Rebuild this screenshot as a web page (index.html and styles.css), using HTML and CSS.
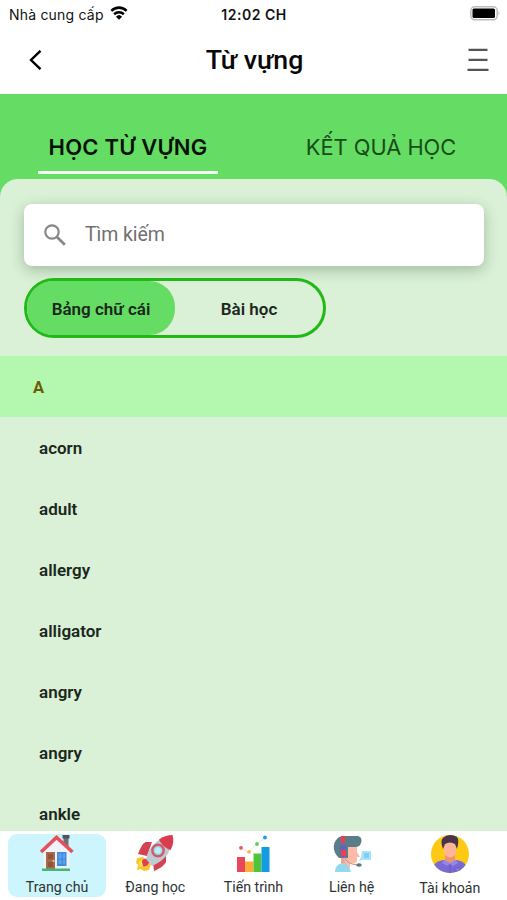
FILE: index.html
```html
<!DOCTYPE html>
<html lang="vi">
<head>
    <meta charset="UTF-8">
    <meta name="viewport" content="width=device-width, initial-scale=1.0">
    <title>Từ vựng</title>
    <link rel="stylesheet" href="styles.css">
</head>
<body>
    <div class="app">
        <div class="status-bar">
            <div class="carrier">
                <span class="carrier-name">Nhà cung cấp</span>
                <svg class="wifi" width="18" height="14" viewBox="0 0 20 15" preserveAspectRatio="none" fill="none" stroke="#000" stroke-width="2.8">
                    <path d="M1.5 5.2a12.2 12.2 0 0 1 17 0"/>
                    <path d="M4.6 8.9a7.8 7.8 0 0 1 10.8 0"/>
                    <path d="M10 14.8 6.6 11.4a4.9 4.9 0 0 1 6.8 0z" fill="#000" stroke="none"/>
                </svg>
            </div>
            <div class="time">12:02 CH</div>
            <div class="battery-wrap">
                <svg width="31" height="15" viewBox="0 0 31 15">
                    <rect x=".8" y=".8" width="26.4" height="13" rx="4" fill="#fff" stroke="#bbb" stroke-width="1.5"/>
                    <rect x="2.5" y="2.5" width="22.500" height="9.6" rx="1.500" fill="#000"/>
                    <path d="M28.5 5.2q2 2 0 4.2z" fill="#bbb"/>
                </svg>
            </div>
        </div>

        <header class="header">
            <button class="icon-btn back">
                <svg width="14" height="20" viewBox="0 0 14 20" fill="none" stroke="#000" stroke-width="2.4"><path d="M12.500 .8 3 10l9.500 9.200"/></svg>
            </button>
            <h1 class="title">Từ vựng</h1>
            <button class="icon-btn menu">
                <svg width="22" height="24" viewBox="0 0 22 24" stroke="#555" stroke-width="2.2"><path d="M1.5 1.9h19M1.5 11.9h19M.5 21.9h21"/></svg>
            </button>
        </header>

        <div class="tabs">
            <div class="tab active">HỌC TỪ VỰNG</div>
            <div class="tab">KẾT QUẢ HỌC</div>
        </div>

        <main class="panel">
            <div class="search">
                <svg width="22" height="22" viewBox="0 0 22 22" fill="none" stroke="#888">
                    <circle cx="8" cy="8" r="6.7" stroke-width="2.2"/>
                    <path d="m13 13 7.8 7.8" stroke-width="2.8"/>
                </svg>
                <span class="search-text">Tìm kiếm</span>
            </div>

            <div class="switch">
                <div class="option selected">Bảng chữ cái</div>
                <div class="option">Bài học</div>
            </div>

            <div class="letter">A</div>
            <ul class="words">
                <li>acorn</li>
                <li>adult</li>
                <li>allergy</li>
                <li>alligator</li>
                <li>angry</li>
                <li>angry</li>
                <li>ankle</li>
            </ul>
        </main>

        <nav class="bottom-nav">
            <a class="nav-item current">
                <!-- house -->
                <svg width="38" height="38" viewBox="0 0 38 38">
                    <path d="M25.500 2h5v13l-5-6z" fill="#68717b"/>
                    <path d="M24.500 1h7v3.500h-7z" fill="#4c535c"/>
                    <path d="M5.500 16 18.500 5l13 12v18h-26z" fill="#eff2fb"/>
                    <path d="M3 18 18.500 3.500 34.500 18" fill="none" stroke="#e84f59" stroke-width="3.500"/>
                    <path d="M8 18h9v17H8z" fill="#a6694d"/>
                    <path d="M10 20h5v5h-5zM10 28h5v5h-5z" fill="#925339"/>
                    <circle cx="15.500" cy="27" r="1" fill="#f4d68c"/>
                    <path d="M19 18h9.500v14H19z" fill="#438be0"/>
                    <path d="M20.500 19.500h3v5h-3zM25 19.500h2v5h-2zM20.500 26h3v4h-3zM25 26h2v4h-2z" fill="#5aa2ec"/>
                    <path d="M4 34.500h28V37H4z" fill="#42b878"/>
                </svg>
                <span class="nav-text">Trang chủ</span>
            </a>
            <a class="nav-item">
                <!-- rocket -->
                <svg width="38" height="38" viewBox="0 0 38 38">
                    <path d="M16 8H9.500C6 10 4 15 2 20l9 2z" fill="#d34355"/>
                    <path d="M30 20v8c-2 4-7 7-12 9l-1-9z" fill="#d34355"/>
                    <path d="M1 24 7 23l8 7-2 6-5 1-3-2-4 1 1-5-2-2z" fill="#f6c82e"/>
                    <path d="m3 28 3-2 2 5 3-1-1 4-3-2-3 1z" fill="#ffe45c"/>
                    <path d="M6 28c0-4 6-4 7-1 1 3-4 7-6 5z" fill="#df4050"/>
                    <path d="M10 25C13 14 19 4 36 2c1 14-6 24-20 30z" fill="#bdcbd2"/>
                    <path d="M23 5.500C28 2 32 1 36.500 1c1.500 5 1 10-2 15C29 14 25 10 23 5.500z" fill="#d83c4d"/>
                    <circle cx="22" cy="16.500" r="5.700" fill="#9bd9ef" stroke="#d65865" stroke-width="2.400"/>
                    <circle cx="22" cy="16.500" r="3" fill="#baf0fa"/>
                </svg>
                <span class="nav-text">Đang học</span>
            </a>
            <a class="nav-item">
                <!-- chart -->
                <svg width="38" height="38" viewBox="0 0 38 38">
                    <path d="m6.500 14 8 4 8-8 8-6" fill="none" stroke="#d8e6ec"/>
                    <path d="M3 23h8v15H3z" fill="#e9485b"/>
                    <path d="M11 27.500h8.500V38H11z" fill="#ffad35"/>
                    <path d="M19.500 19.500h8V38h-8z" fill="#4fc63a"/>
                    <path d="M27.500 13h8v25h-8z" fill="#139be4"/>
                    <circle cx="7" cy="13.800" r="1.900" fill="#e85368"/>
                    <circle cx="15" cy="17.800" r="1.900" fill="#ffb34b"/>
                    <circle cx="23" cy="10" r="1.900" fill="#62cd51"/>
                    <circle cx="31" cy="3.500" r="1.900" fill="#199fe4"/>
                </svg>
                <span class="nav-text">Tiến trình</span>
            </a>
            <a class="nav-item">
                <!-- headset -->
                <svg width="38" height="38" viewBox="0 0 38 38">
                    <path d="M8 12h16v6l3 5h-3v4c-1 3-4 3-7 2v5H8z" fill="#ffbaa8"/>
                    <path d="M11 22c0 5 1 8 5 12H8V20z" fill="#f3a290"/>
                    <path d="M2 38c0-6 4-9 9-9 3 1 6 5 7 9z" fill="#93d9ee"/>
                    <path d="M4 5C6 2 10 2 14 2h9c6 0 6 4 5 7-1 3-3 4-6 4h-7v11H6C0 19-1 10 4 5z" fill="#597d89"/>
                    <path d="M7 11h6v11c-2 2-5 1-6-1z" fill="#6064bd"/>
                    <path d="M8 2h4v7H8zM8 16h5v6H8z" fill="#ef3c4e"/>
                    <path d="M11 23q3 7 13 8" fill="none" stroke="#a99aa1" stroke-width="1"/>
                    <ellipse cx="26" cy="31" rx="2.800" ry="1.700" fill="#607782"/>
                    <path d="M29 17h9v9h-9l-3 1 2-4z" fill="#a9e1f8"/>
                    <path d="M31 19h5v5h-5z" fill="#7dcff3"/>
                </svg>
                <span class="nav-text">Liên hệ</span>
            </a>
            <a class="nav-item account">
                <!-- avatar -->
                <svg width="40" height="40" viewBox="0 0 40 40">
                    <defs><clipPath id="avatar"><circle cx="20" cy="20" r="19"/></clipPath></defs>
                    <circle cx="20" cy="20" r="19" fill="#fdc915"/>
                    <g clip-path="url(#avatar)">
                        <path d="M3 42V33q1-5 10-7h14q9 2 10 8v9z" fill="#7969d5"/>
                        <path d="M15 18h10v9q-5 5-10 0z" fill="#ed9371"/>
                        <path d="M14 9q6-6 12 0v9c-1 7-11 7-12 0z" fill="#ffb599"/>
                        <path d="m14 26 6 3 6-3 2 3-5 3-3-2-3 2-5-3z" fill="#9286ed"/>
                        <path d="M20 30v9M25 34h5v3h-5z" fill="#8b7de9" stroke="#6656b9" stroke-width=".8"/>
                    </g>
                    <path d="M13 15c-2-6-2-9 0-11 3-3 8-4 12-2 4 1 4 6 2 13l-2-5q-5-3-10 0z" fill="#493548"/>
                </svg>
                <span class="nav-text">Tài khoản</span>
            </a>
        </nav>
    </div>
</body>
</html>
```
FILE: styles.css
```css
* { margin: 0; padding: 0; box-sizing: border-box; }

body {
    font-family: Roboto, sans-serif;
    background: #fff;
    color: #1b271b;
}

svg { display: block; flex-shrink: 0; }

.app {
    height: 900px;
    display: flex;
    flex-direction: column;
    overflow: hidden;
}

.status-bar {
    height: 28px;
    flex-shrink: 0;
    padding: 0 6px 0 9px;
    display: grid;
    grid-template-columns: 1fr 100px 1fr;
    align-items: center;
    font-family: Inter, sans-serif;
    font-size: 14px;
    color: #111;
}

.carrier { display: flex; align-items: center; gap: 6px; }
.carrier-name { letter-spacing: 0.2px; }
.wifi { margin-bottom: 2px; }

.time {
    margin-left: -2px;
    font-size: 14px;
    font-weight: 600;
    letter-spacing: 0.5px;
    text-align: center;
}

.battery-wrap { display: flex; justify-content: flex-end; margin-bottom: 2px; }

.header {
    height: 66px;
    flex-shrink: 0;
    padding: 0 18px 3px 28px;
    display: flex;
    align-items: center;
    justify-content: space-between;
}

.icon-btn {
    background: none;
    border: none;
    cursor: pointer;
}

.title {
    font-size: 26.7px;
    font-weight: 500;
    color: #080808;
}

.tabs {
    height: 103px;
    flex-shrink: 0;
    padding: 26px 36px 0 38px;
    display: flex;
    justify-content: space-between;
    background: #65dc64;
}

.tab {
    width: 180px;
    height: 54px;
    display: flex;
    align-items: center;
    justify-content: center;
    font-family: Inter, sans-serif;
    font-size: 21.8px;
    color: #174d19;
}

.tab.active {
    font-size: 22px;
    font-weight: 600;
    letter-spacing: 0.2px;
    color: #041004;
    border-bottom: 3px solid #f1fff0;
    border-radius: 1px;
    padding-top: 3px;
}

.panel {
    flex: 1;
    min-height: 0;
    margin-top: -18px;
    padding-top: 25px;
    background: #daf0d7;
    border-radius: 18px 18px 0 0;
    overflow: hidden;
}

.search {
    height: 62px;
    margin: 0 23px 12px 24px;
    padding: 0 20px 1px;
    display: flex;
    align-items: center;
    gap: 19px;
    background: #fff;
    border-radius: 8px;
    box-shadow: 0 4px 14px rgba(30, 70, 30, 0.3);
    font-size: 19.5px;
    color: #707070;
}

.search-text { letter-spacing: -0.1px; }

.switch {
    width: 302px;
    height: 60px;
    margin: 0 0 18px 24px;
    display: flex;
    border: 3.5px solid #20b915;
    border-radius: 30px;
}

.option {
    flex: 1;
    padding-top: 1px;
    display: flex;
    align-items: center;
    justify-content: center;
    border-radius: 26px;
    font-size: 17px;
    font-weight: 600;
}

.option.selected { background: #65dc64; }

.letter {
    height: 61px;
    padding-left: 33px;
    background: #b4f8b0;
    font-size: 16.5px;
    font-weight: 700;
    line-height: 63px;
    color: #6b5b09;
}

.words { list-style: none; }

.words li {
    height: 61px;
    padding-left: 39px;
    font-size: 17px;
    font-weight: 600;
    line-height: 63px;
}

.bottom-nav {
    height: 69px;
    flex-shrink: 0;
    padding: 3px 8px 0;
    display: flex;
    background: #fff;
}

.nav-item {
    width: 98.2px;
    height: 63px;
    display: flex;
    flex-direction: column;
    align-items: center;
    gap: 6px;
    font-size: 14.2px;
    line-height: 18px;
    color: #2d3334;
}

.nav-item.current {
    background: #ccf5fd;
    border-radius: 9px;
}

.nav-item.account { gap: 5px; }
```
